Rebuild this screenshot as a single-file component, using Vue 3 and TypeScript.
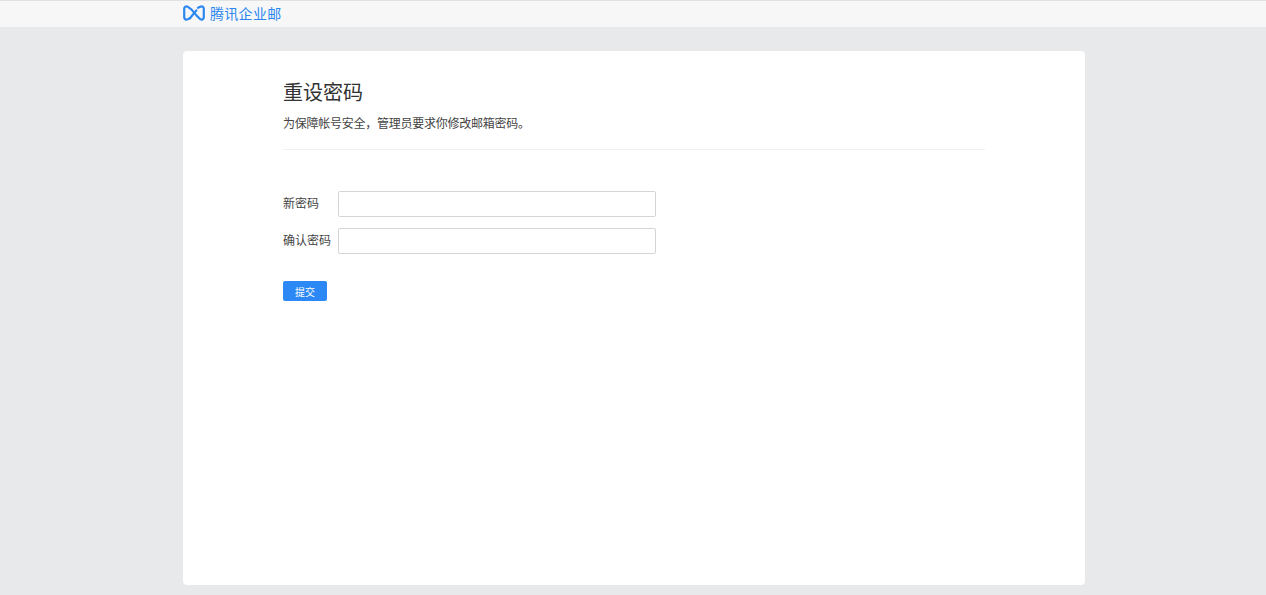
<template>
  <div class="page">
    <header class="top-bar">
      <div class="top-inner">
        <svg class="logo" width="22" height="16" viewBox="0 0 22 16" fill="none">
          <path
            d="M7 13.2 4.6 14.3C2.9 15 1.2 14 1.2 12.2V3.8C1.2 2 2.9 1 4.6 1.7L8.6 4.6 13.6 10.6 17.4 14.3C19.1 15 20.8 14 20.8 12.2V3.8C20.8 2 19.1 1 17.4 1.7L15 2.8"
            stroke="#2c88f0"
            stroke-width="2.2"
            stroke-linecap="round"
            stroke-linejoin="round"
          />
          <path d="M13.4 5.4 8.8 11 7 13.2" stroke="#2c88f0" stroke-width="2.2" stroke-linecap="round" />
        </svg>
        <span class="brand">腾讯企业邮</span>
      </div>
    </header>

    <main class="card">
      <h1 class="title">重设密码</h1>
      <p class="desc">为保障帐号安全，管理员要求你修改邮箱密码。</p>
      <div class="divider"></div>

      <form class="form" @submit.prevent>
        <div v-for="field in fields" :key="field" class="row">
          <label class="label">{{ field }}</label>
          <input class="input" type="password" />
        </div>
        <button class="submit" type="submit">提交</button>
      </form>
    </main>
  </div>
</template>

<script setup lang="ts">
const fields: string[] = ['新密码', '确认密码'];
</script>

<style>
html,
body {
  margin: 0;
  background: #e8e9eb;
}
</style>

<style scoped>
.page {
  height: 595px;
  overflow: hidden;
  background: #e8e9eb;
  font-family: "Liberation Sans", "Noto Sans CJK SC", sans-serif;
  color: #3a3a3a;
}

.top-bar {
  height: 26px;
  border-top: 1px solid #e2e2e2;
  background: #f7f7f7;
}

.top-inner {
  display: flex;
  align-items: center;
  gap: 5px;
  width: 902px;
  height: 24px;
  margin-left: 183px;
}

.brand {
  font-size: 14px;
  letter-spacing: 0.3px;
  color: #2c88f0;
}

.card {
  box-sizing: border-box;
  width: 902px;
  height: 534px;
  margin: 24px 0 0 183px;
  padding: 28px 100px 0;
  border-radius: 4px;
  background: #fff;
}

.title {
  margin: 0;
  font-size: 20px;
  font-weight: 400;
  line-height: 28px;
  color: #333;
}

.desc {
  margin: 8px 0 0;
  font-size: 12px;
  line-height: 18px;
  letter-spacing: -0.25px;
  color: #444;
}

.divider {
  height: 1px;
  margin-top: 16px;
  background: #f0f0f0;
}

.form {
  display: flex;
  flex-direction: column;
  align-items: flex-start;
  gap: 11px;
  margin-top: 41px;
}

.row {
  display: flex;
  align-items: center;
}

.label {
  width: 55px;
  padding-bottom: 4px;
  font-size: 12px;
  color: #444;
}

.input {
  box-sizing: border-box;
  width: 318px;
  height: 26px;
  border: 1px solid #d5d5d5;
  border-radius: 2px;
  background: #fff;
  outline: none;
}

.submit {
  width: 44px;
  height: 20px;
  margin-top: 16px;
  padding: 0;
  border: none;
  border-radius: 2px;
  background: #2b88f5;
  font-family: inherit;
  font-size: 10px;
  color: #fff;
}
</style>
